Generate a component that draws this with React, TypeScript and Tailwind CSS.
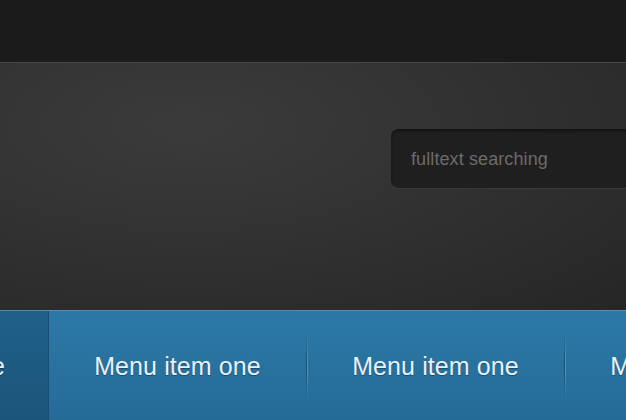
const menu = ["Home", "Menu item one", "Menu item one", "Menu item one"];

function Separator() {
  return (
    <div className="ml-[2px] -mr-[2px] flex h-[66px] w-[3px] shrink-0">
      <div className="w-px bg-gradient-to-b from-transparent via-[#18506f] to-transparent" />
      <div className="w-px bg-gradient-to-b from-transparent via-[#5b95bb] to-transparent" />
      <div className="w-px" />
    </div>
  );
}

export default function App() {
  return (
    <div className="flex h-[420px] w-[626px] flex-col overflow-hidden bg-[#1b1b1b] font-['Liberation_Sans',Arial,sans-serif]">
      {/* top strip */}
      <div className="h-[62px] shrink-0 bg-[#1b1b1b]" />

      {/* header */}
      <div className="relative h-[248px] shrink-0 border-t border-[#484848] bg-[radial-gradient(ellipse_at_30%_25%,#3b3b3b_0%,#323232_45%,#262626_100%)]">
        <div className="flex justify-end pt-[66px]">
          <div className="flex h-[60px] w-[240px] -mr-[5px] items-center rounded-[8px] border-b border-[#3a3a3a] bg-[#1f1f1f] pl-[20px] pt-[2px] shadow-[inset_0_2px_3px_rgba(0,0,0,0.45)]">
            <span className="text-[18px] tracking-[0.1px] text-[#6b6b6b]">
              fulltext searching
            </span>
          </div>
        </div>
      </div>

      {/* navigation */}
      <nav className="flex h-[110px] shrink-0 border-t border-[#4f8db8] bg-gradient-to-b from-[#2c79a7] to-[#256b98] pt-[3px]">
        <div className="-mt-[3px] flex w-[49px] shrink-0 items-center justify-end overflow-hidden border-r border-[#184e70] bg-gradient-to-b from-[#1f6089] to-[#1c557b] pt-[3px]">
          <span className="mr-[43px] whitespace-nowrap text-[25px] text-[#e9f1f7] [text-shadow:0_1px_1px_rgba(0,0,0,0.35)]">
            {menu[0]}
          </span>
        </div>
        {menu.slice(1).map((item, i) => (
          <div key={i} className="flex shrink-0 items-center">
            <div className="flex w-[255px] items-center justify-center pl-[2px]">
              <span className="whitespace-nowrap text-[25px] tracking-[0.1px] text-[#e9f1f7] [text-shadow:0_1px_1px_rgba(0,0,0,0.35)]">
                {item}
              </span>
            </div>
            {i < 2 && <Separator />}
          </div>
        ))}
      </nav>
    </div>
  );
}
